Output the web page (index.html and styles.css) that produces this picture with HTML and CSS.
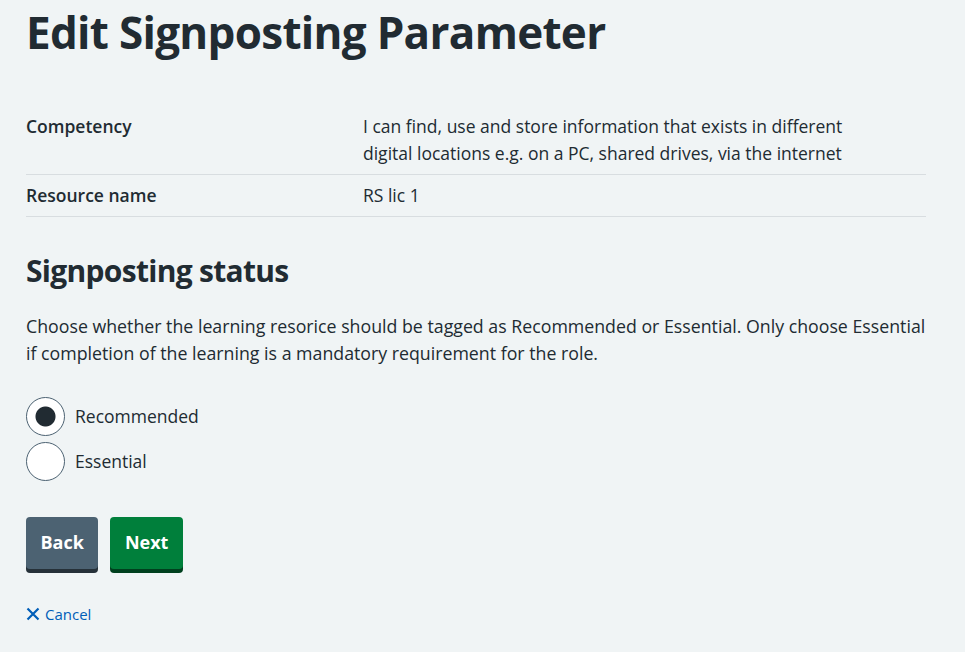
FILE: index.html
```html
<!DOCTYPE html>
<html lang="en">
<head>
<meta charset="utf-8">
<title>Edit Signposting Parameter</title>
<link rel="stylesheet" href="styles.css">
</head>
<body>
<main class="page">
  <h1 class="title">Edit Signposting Parameter</h1>
  <dl class="summary">
    <div class="summary-row">
      <dt class="summary-key">Competency</dt>
      <dd class="summary-value">I can find, use and store information that exists in different digital locations e.g. on a PC, shared drives, via the internet</dd>
    </div>
    <div class="summary-row">
      <dt class="summary-key">Resource name</dt>
      <dd class="summary-value">RS lic 1</dd>
    </div>
  </dl>
  <form class="form">
    <fieldset class="fieldset">
      <legend class="legend">Signposting status</legend>
      <p class="hint">Choose whether the learning resorice should be tagged as Recommended or Essential. Only choose Essential if completion of the learning is a mandatory requirement for the role.</p>
      <div class="radios">
        <label class="radio">
          <input class="radio-input" type="radio" name="status" value="recommended" checked>
          <span class="radio-label">Recommended</span>
        </label>
        <label class="radio">
          <input class="radio-input" type="radio" name="status" value="essential">
          <span class="radio-label">Essential</span>
        </label>
      </div>
    </fieldset>
    <div class="actions">
      <button type="button" class="btn btn-secondary">Back</button>
      <button type="submit" class="btn btn-primary">Next</button>
    </div>
    <a class="cancel" href="#">
      <svg class="cancel-icon" viewBox="0 0 14 14" width="14" height="14" aria-hidden="true"><path d="M1.5 1.5 L12.5 12.5 M12.5 1.5 L1.5 12.5" stroke="#005eb8" stroke-width="2.2" fill="none"/></svg>
      <span>Cancel</span>
    </a>
  </form>
</main>
</body>
</html>
```
FILE: styles.css
```css
html, body {
  margin: 0;
  padding: 0;
  background: #f0f4f5;
}
body {
  font-family: "Open Sans", "Liberation Sans", sans-serif;
  color: #212b32;
  font-size: 19px;
  line-height: 27px;
}
.page {
  width: 900px;
  margin-left: 26px;
  display: flex;
  flex-direction: column;
}
.title {
  margin: 4px 0 46px;
  font-size: 44px;
  line-height: 56px;
  font-weight: 700;
  letter-spacing: -0.7px;
}
.summary {
  margin: 0;
  font-size: 17.5px;
}
.summary-row {
  display: grid;
  grid-template-columns: 337px 500px;
  padding: 7px 0;
  border-bottom: 1px solid #d8dde0;
}
.summary-key {
  font-weight: 600;
}
.summary-value {
  margin: 0;
}
.form {
  display: flex;
  flex-direction: column;
  align-items: flex-start;
}
.fieldset {
  margin: 34px 0 0;
  padding: 0;
  border: 0;
  min-width: 0;
}
.legend {
  padding: 0;
  font-size: 30px;
  line-height: 40px;
  font-weight: 700;
  letter-spacing: -0.7px;
}
.hint {
  margin: 22px 0 29px;
  font-size: 17.75px;
}
.radios {
  display: flex;
  flex-direction: column;
  gap: 5px;
}
.radio {
  display: flex;
  align-items: center;
  gap: 10px;
  height: 40px;
  cursor: pointer;
}
.radio-input {
  appearance: none;
  -webkit-appearance: none;
  margin: 0;
  width: 39px;
  height: 39px;
  border: 1px solid #4c6272;
  border-radius: 50%;
  background: #ffffff;
  flex: none;
}
.radio-input:checked {
  background: radial-gradient(circle, #212b32 0 9.5px, #ffffff 10.5px);
}
.radio-label {
  font-size: 17.5px;
}
.actions {
  display: flex;
  gap: 12px;
  margin-top: 36px;
}
.btn {
  font-family: inherit;
  font-size: 18px;
  line-height: 27px;
  font-weight: 700;
  color: #ffffff;
  border: 0;
  border-radius: 4px;
  padding: 12px 14.5px 13px;
  cursor: pointer;
}
.btn-secondary {
  background: #4c6272;
  box-shadow: 0 4px 0 #263139;
}
.btn-primary {
  background: #007f3b;
  box-shadow: 0 4px 0 #00401e;
}
.cancel {
  margin-top: 33px;
  display: flex;
  align-items: center;
  gap: 5px;
  color: #005eb8;
  text-decoration: none;
  font-size: 15px;
  line-height: 24px;
}
.cancel-icon {
  flex: none;
}
```
